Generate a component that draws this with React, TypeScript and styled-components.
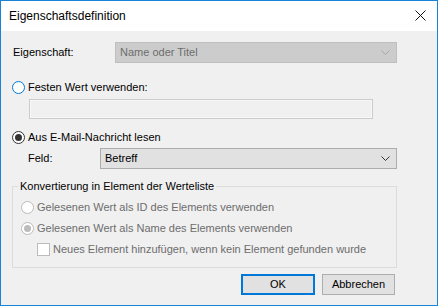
import React from 'react';
import styled, { createGlobalStyle } from 'styled-components';

const GlobalStyle = createGlobalStyle`
  html, body {
    margin: 0;
    padding: 0;
    background: #ffffff;
  }
  * {
    box-sizing: border-box;
  }
`;

function Chevron({ disabled }: { disabled?: boolean }) {
  return (
    <svg width="9" height="5" viewBox="0 0 9 5">
      <path
        d="M0.5 0.5 L4.5 4.5 L8.5 0.5"
        fill="none"
        stroke={disabled ? '#a6a6a6' : '#333333'}
        strokeWidth="1"
      />
    </svg>
  );
}

function App() {
  return (
    <>
      <GlobalStyle />
      <Window>
        <TitleBar>
          <Title>Eigenschaftsdefinition</Title>
          <CloseButton>
            <svg width="11" height="11" viewBox="0 0 11 11">
              <path d="M0.5 0.5 L10.5 10.5 M10.5 0.5 L0.5 10.5" stroke="#111" strokeWidth="1" />
            </svg>
          </CloseButton>
        </TitleBar>
        <Body>
          <FieldRow $top={11} $left={11}>
            <Label $width={103}>Eigenschaft:</Label>
            <Combo $width={282} disabled>
              <span>Name oder Titel</span>
              <Chevron disabled />
            </Combo>
          </FieldRow>

          <OptionRow $top={16} $left={11}>
            <Radio $state="focus" />
            <OptionText>Festen Wert verwenden:</OptionText>
          </OptionRow>
          <TextBox $left={28} $width={344} />

          <OptionRow $top={10} $left={11}>
            <Radio $state="checked" />
            <OptionText>Aus E-Mail-Nachricht lesen</OptionText>
          </OptionRow>
          <FieldRow $top={3} $left={26}>
            <Label $width={73}>Feld:</Label>
            <Combo $width={297}>
              <span>Betreff</span>
              <Chevron />
            </Combo>
          </FieldRow>

          <Group>
            <Legend>Konvertierung in Element der Werteliste</Legend>
            <OptionRow $top={5} $left={8} $disabled>
              <Radio $state="disabled" />
              <OptionText>Gelesenen Wert als ID des Elements verwenden</OptionText>
            </OptionRow>
            <OptionRow $top={5} $left={8} $disabled>
              <Radio $state="disabledChecked" />
              <OptionText>Gelesenen Wert als Name des Elements verwenden</OptionText>
            </OptionRow>
            <OptionRow $top={5} $left={24} $disabled>
              <CheckBox />
              <OptionText>Neues Element hinzufügen, wenn kein Element gefunden wurde</OptionText>
            </OptionRow>
          </Group>

          <ButtonBar>
            <Button $default>OK</Button>
            <Button>Abbrechen</Button>
          </ButtonBar>
        </Body>
      </Window>
    </>
  );
}

const Window = styled.div`
  display: flex;
  flex-direction: column;
  width: 438px;
  height: 306px;
  border: 1px solid #1883d7;
  font-family: 'Segoe UI', 'Liberation Sans', Arial, sans-serif;
  font-size: 11px;
  color: #000000;
  background: #f0f0f0;
  overflow: hidden;
`;

const TitleBar = styled.div`
  display: flex;
  align-items: center;
  justify-content: space-between;
  height: 30px;
  padding: 0 8px 1px 8px;
  background: #ffffff;
`;

const Title = styled.span`
  font-size: 12px;
  color: #000000;
`;

const CloseButton = styled.div`
  display: flex;
  align-items: center;
  justify-content: center;
  width: 16px;
  height: 16px;
  margin-right: 1px;
`;

const Body = styled.div`
  display: flex;
  flex-direction: column;
  flex: 1;
  background: #f0f0f0;
`;

const FieldRow = styled.div<{ $top: number; $left: number }>`
  display: flex;
  align-items: center;
  margin-top: ${(p) => p.$top}px;
  padding-left: ${(p) => p.$left}px;
`;

const Label = styled.span<{ $width: number }>`
  width: ${(p) => p.$width}px;
  padding-left: 1px;
  line-height: 15px;
`;

const Combo = styled.div<{ $width: number; disabled?: boolean }>`
  display: flex;
  align-items: center;
  justify-content: space-between;
  width: ${(p) => p.$width}px;
  height: 21px;
  padding: 0 6px 0 4px;
  border: 1px solid ${(p) => (p.disabled ? '#bfbfbf' : '#adadad')};
  background: ${(p) => (p.disabled ? '#cccccc' : '#e1e1e1')};
  color: ${(p) => (p.disabled ? '#6d6d6d' : '#000000')};
  line-height: 15px;
`;

const OptionRow = styled.div<{ $top: number; $left: number; $disabled?: boolean }>`
  display: flex;
  align-items: center;
  height: 16px;
  margin-top: ${(p) => p.$top}px;
  padding-left: ${(p) => p.$left}px;
  color: ${(p) => (p.$disabled ? '#6d6d6d' : '#000000')};
`;

const OptionText = styled.span`
  margin-left: 3px;
  line-height: 15px;
  white-space: nowrap;
`;

type RadioState = 'focus' | 'checked' | 'disabled' | 'disabledChecked';

const Radio = styled.span<{ $state: RadioState }>`
  position: relative;
  flex: none;
  width: 13px;
  height: 13px;
  border-radius: 50%;
  background: #ffffff;
  border: 1px solid
    ${(p) =>
      p.$state === 'focus'
        ? '#0078d7'
        : p.$state === 'checked'
        ? '#333333'
        : '#bcbcbc'};

  &::after {
    content: '';
    display: ${(p) => (p.$state === 'checked' || p.$state === 'disabledChecked' ? 'block' : 'none')};
    position: absolute;
    left: 2px;
    top: 2px;
    width: 7px;
    height: 7px;
    border-radius: 50%;
    background: ${(p) => (p.$state === 'checked' ? '#333333' : '#bcbcbc')};
  }
`;

const CheckBox = styled.span`
  flex: none;
  width: 13px;
  height: 13px;
  border: 1px solid #bcbcbc;
  background: #ffffff;
`;

const TextBox = styled.div<{ $left: number; $width: number }>`
  width: ${(p) => p.$width}px;
  height: 20px;
  margin-top: 4px;
  margin-left: ${(p) => p.$left}px;
  border: 1px solid #cccccc;
  box-shadow: inset 0 0 0 1px #f7f7f7;
  background: #f0f0f0;
`;

const Group = styled.fieldset`
  width: 385px;
  height: 89px;
  margin: 10px 0 0 11px;
  padding: 0;
  border: 1px solid #dcdcdc;
  min-inline-size: 0;
`;

const Legend = styled.legend`
  margin-left: 5px;
  padding: 0 2px;
  line-height: 15px;
  color: #000000;
`;

const ButtonBar = styled.div`
  display: flex;
  justify-content: flex-end;
  gap: 7px;
  margin-top: 6px;
  padding-right: 42px;
`;

const Button = styled.div<{ $default?: boolean }>`
  display: flex;
  align-items: center;
  justify-content: center;
  width: ${(p) => (p.$default ? 74 : 73)}px;
  height: 21px;
  border: ${(p) => (p.$default ? '2px solid #0078d7' : '1px solid #adadad')};
  background: #e1e1e1;
  line-height: 15px;
`;

export default App;
